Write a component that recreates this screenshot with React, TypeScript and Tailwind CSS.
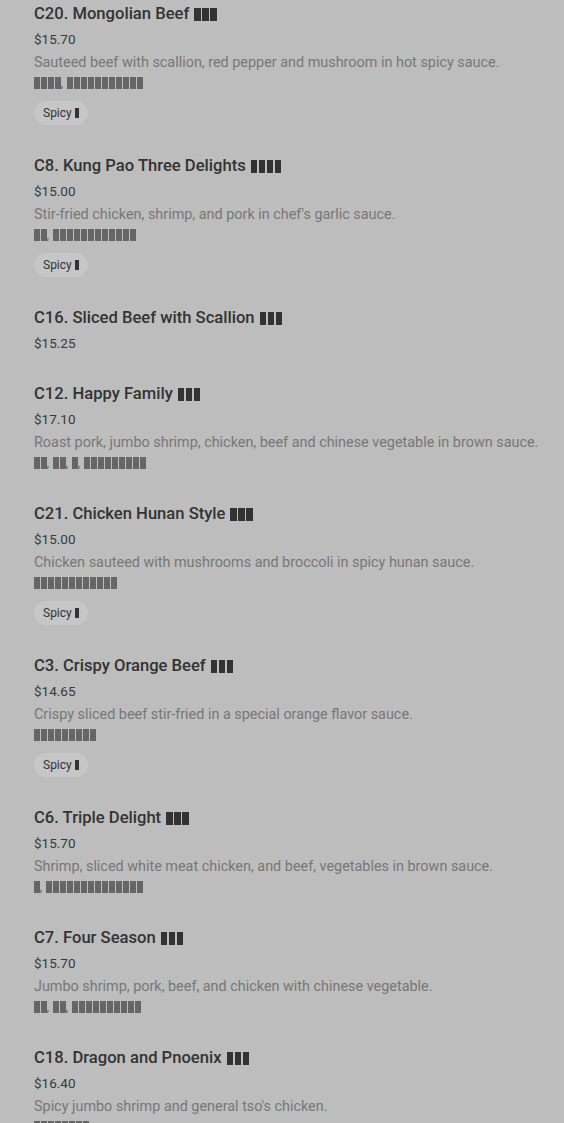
import React from "react";

type Dish = { title: string; cn: number; price: string; desc?: string; zh?: number[]; spicy?: boolean };

const dishes: Dish[] = [
  { title: "C20. Mongolian Beef", cn: 3, price: "$15.70", desc: "Sauteed beef with scallion, red pepper and mushroom in hot spicy sauce.", zh: [4, 11], spicy: true },
  { title: "C8. Kung Pao Three Delights", cn: 4, price: "$15.00", desc: "Stir-fried chicken, shrimp, and pork in chef's garlic sauce.", zh: [2, 12], spicy: true },
  { title: "C16. Sliced Beef with Scallion", cn: 3, price: "$15.25" },
  { title: "C12. Happy Family", cn: 3, price: "$17.10", desc: "Roast pork, jumbo shrimp, chicken, beef and chinese vegetable in brown sauce.", zh: [2, 2, 1, 9] },
  { title: "C21. Chicken Hunan Style", cn: 3, price: "$15.00", desc: "Chicken sauteed with mushrooms and broccoli in spicy hunan sauce.", zh: [12], spicy: true },
  { title: "C3. Crispy Orange Beef", cn: 3, price: "$14.65", desc: "Crispy sliced beef stir-fried in a special orange flavor sauce.", zh: [9], spicy: true },
  { title: "C6. Triple Delight", cn: 3, price: "$15.70", desc: "Shrimp, sliced white meat chicken, and beef, vegetables in brown sauce.", zh: [1, 14] },
  { title: "C7. Four Season", cn: 3, price: "$15.70", desc: "Jumbo shrimp, pork, beef, and chicken with chinese vegetable.", zh: [2, 2, 10] },
  { title: "C18. Dragon and Pnoenix", cn: 3, price: "$16.40", desc: "Spicy jumbo shrimp and general tso's chicken.", zh: [8] },
];

// missing-glyph boxes, as the page shows them
function Tofu({ n, w = "w-[5.5px]", h = "h-[12px]" }: { n: number; w?: string; h?: string }) {
  return (
    <span className="inline-flex gap-[1.5px] align-[-1px]">
      {Array.from({ length: n }).map((_, i) => (
        <span key={i} className={`inline-block ${w} ${h} bg-current`} />
      ))}
    </span>
  );
}

export default function App() {
  return (
    <div className="h-[1123px] w-full bg-[#bdbdbd] font-['Roboto',sans-serif] overflow-hidden">
      <div className="flex flex-col gap-[31px] pl-[34px] pr-[16px] pt-[4px]">
        {dishes.map((d) => (
          <div key={d.title} className="flex flex-col">
            <div className="flex h-[20px] items-center gap-[5px] text-[16.6px] font-medium leading-[20px] text-[#333]">
              <span>{d.title}</span>
              <Tofu n={d.cn} w="w-[6.5px]" h="h-[13px]" />
            </div>
            <div className="mt-[5px] text-[13.5px] leading-[20px] text-[#3a3a3a]">{d.price}</div>
            {d.desc && (
              <div className="mt-[4px] text-[14.4px] leading-[20px] text-[#777]">{d.desc}</div>
            )}
            {d.zh && (
              <div className="flex h-[20px] items-center text-[13px] leading-[20px] text-[#666]">
                {d.zh.map((n, i) => (
                  <span key={i} className="flex items-center">
                    {i > 0 && <span className="mr-[4px]">,</span>}
                    <Tofu n={n} />
                  </span>
                ))}
              </div>
            )}
            {d.spicy && (
              <div className="mt-[7px]">
                <span className="inline-flex items-center gap-[3px] rounded-full bg-[#c6c6c6] px-[9px] py-[4px] text-[12px] leading-[16px] text-[#333]">
                  Spicy <Tofu n={1} w="w-[4px]" h="h-[10px]" />
                </span>
              </div>
            )}
          </div>
        ))}
      </div>
    </div>
  );
}
